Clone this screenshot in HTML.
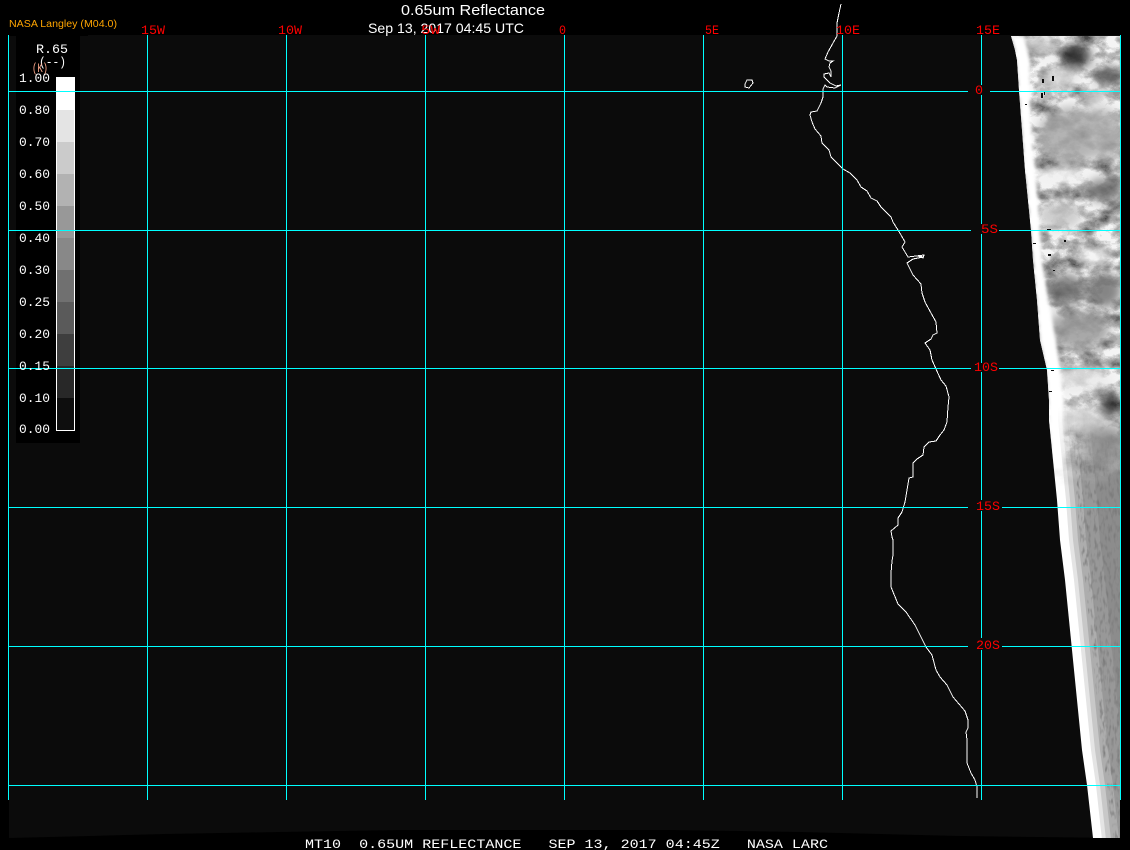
<!DOCTYPE html>
<html><head><meta charset="utf-8"><title>0.65um Reflectance</title>
<style>
html,body{margin:0;padding:0;background:#000;width:1130px;height:850px;overflow:hidden}
svg{display:block}
text{white-space:pre}
.m{font-family:"Liberation Mono","DejaVu Sans Mono",monospace}
.s{font-family:"Liberation Sans",sans-serif}
.r{fill:#ff0000;font-size:13px}
.w{fill:#fff;font-size:13px}
.g rect{fill:#00ffff}
</style></head><body>
<svg width="1130" height="850" viewBox="0 0 1130 850" xmlns="http://www.w3.org/2000/svg">
<defs>
<clipPath id="sat"><polygon points="1011,36 1015,50 1017,60 1019,90 1022,130 1025,170 1028,200 1031,230 1033,260 1037,300 1040,340 1047,370 1049,400 1049,420 1052,450 1057,500 1060,540 1065,580 1071,640 1077,700 1082,750 1087,785 1093,838 1120,838 1120,36"/></clipPath>
<filter id="cl" x="0" y="0" width="100%" height="100%" color-interpolation-filters="sRGB">
<feTurbulence type="fractalNoise" baseFrequency="0.05 0.07" numOctaves="4" seed="7"/>
<feColorMatrix type="matrix" values="1.8 0 0 0 -0.24 1.8 0 0 0 -0.24 1.8 0 0 0 -0.24 0 0 0 0 1"/>
<feComponentTransfer><feFuncR type="discrete" tableValues=".3 .4 .48 .54 .6 .66 .72 .8 .88 .96"/><feFuncG type="discrete" tableValues=".3 .4 .48 .54 .6 .66 .72 .8 .88 .96"/><feFuncB type="discrete" tableValues=".3 .4 .48 .54 .6 .66 .72 .8 .88 .96"/></feComponentTransfer>
</filter>
<filter id="st" x="0" y="0" width="100%" height="100%" color-interpolation-filters="sRGB">
<feTurbulence type="fractalNoise" baseFrequency="0.35 0.12" numOctaves="2" seed="3"/>
<feColorMatrix type="matrix" values="0 0 0 0 .47 0 0 0 0 .47 0 0 0 0 .47 2.4 0 0 0 -1.15"/>
</filter>
<filter id="b5"><feGaussianBlur stdDeviation="5"/></filter>
<filter id="b3"><feGaussianBlur stdDeviation="1.5"/></filter>
<linearGradient id="fade" x1="0" y1="0" x2="0" y2="1"><stop offset="0" stop-color="#fff"/><stop offset=".82" stop-color="#fff"/><stop offset="1" stop-color="#000"/></linearGradient>
<mask id="fm" maskUnits="userSpaceOnUse" x="1000" y="36" width="130" height="450"><rect x="1000" y="36" width="130" height="450" fill="url(#fade)"/></mask>
<polygon id="edge" points="1037,300 1040,340 1047,370 1049,400 1049,420 1052,450 1057,500 1060,540 1065,580 1071,640 1077,700 1082,750 1087,785 1093,840 1130,840 1130,300"/>
<clipPath id="nc"><use href="#edge" x="20"/></clipPath>
</defs>
<rect width="1130" height="850" fill="#000"/>
<polygon fill="#0b0b0b" points="9,36 88,36 88,35 1120,35 1120,838 960,836 800,832 670,830 400,830 280,832 165,834 125,835 90,836 50,837 9,838"/>
<rect x="16" y="36" width="64" height="407" fill="#000"/>

<!-- satellite -->
<g clip-path="url(#sat)">
<rect x="1000" y="36" width="130" height="810" fill="#fff"/>
<use href="#edge" x="9" fill="#e4e4e4"/>
<use href="#edge" x="13" fill="#c8c8c8"/>
<use href="#edge" x="18" fill="#adadad"/>
<use href="#edge" x="26" fill="#989898"/>
<use href="#edge" x="40" fill="#8c8c8c"/>
<g clip-path="url(#nc)"><rect x="1066" y="380" width="56" height="460" filter="url(#st)"/></g>

<g mask="url(#fm)">
<rect x="1000" y="36" width="130" height="450" filter="url(#cl)"/>
<g filter="url(#b5)" opacity=".8">
<ellipse cx="1076" cy="56" rx="15" ry="13" fill="#1c1c1c"/>
<ellipse cx="1108" cy="75" rx="14" ry="9" fill="#555"/>
<ellipse cx="1040" cy="45" rx="18" ry="9" fill="#ccc"/>
<ellipse cx="1060" cy="78" rx="20" ry="10" fill="#e0e0e0"/>
<ellipse cx="1095" cy="100" rx="10" ry="14" fill="#ddd"/>
<ellipse cx="1072" cy="135" rx="34" ry="28" fill="#a4a4a4"/>
<ellipse cx="1105" cy="135" rx="18" ry="26" fill="#aaa"/>
<ellipse cx="1060" cy="175" rx="28" ry="9" fill="#f0f0f0"/>
<ellipse cx="1105" cy="190" rx="20" ry="12" fill="#777"/>
<ellipse cx="1060" cy="215" rx="22" ry="14" fill="#c4c4c4"/>
<ellipse cx="1095" cy="255" rx="16" ry="8" fill="#f4f4f4"/>
<ellipse cx="1065" cy="290" rx="20" ry="16" fill="#666"/>
<ellipse cx="1105" cy="290" rx="16" ry="18" fill="#6a6a6a"/>
<ellipse cx="1078" cy="330" rx="32" ry="20" fill="#969696"/>
<ellipse cx="1080" cy="380" rx="30" ry="12" fill="#e8e8e8"/>
<ellipse cx="1110" cy="405" rx="9" ry="14" fill="#2a2a2a"/>
<ellipse cx="1080" cy="420" rx="24" ry="14" fill="#ececec"/>
<ellipse cx="1105" cy="445" rx="20" ry="18" fill="#8a8a8a"/>
</g>
<g filter="url(#b3)">
<polygon fill="#fff" points="1011,36 1015,50 1019,90 1022,130 1025,170 1028,200 1033,260 1037,300 1040,340 1047,370 1049,420 1052,470 1064,470 1064,400 1056,340 1048,300 1042,260 1038,200 1033,150 1030,110 1030,60 1024,36"/>
</g>
</g>
</g>
<!-- speckles -->
<g fill="#0b0b0b" shape-rendering="crispEdges">
<rect x="1042" y="79" width="2" height="4"/><rect x="1052" y="76" width="2" height="5"/><rect x="1041" y="93" width="2" height="5"/><rect x="1044" y="92" width="1" height="3"/><rect x="1025" y="104" width="2" height="1"/><rect x="1047" y="229" width="4" height="1"/><rect x="1033" y="243" width="3" height="1"/><rect x="1048" y="254" width="3" height="2"/><rect x="1064" y="240" width="2" height="2"/><rect x="1053" y="270" width="2" height="1"/><rect x="1051" y="370" width="3" height="1"/><rect x="1049" y="391" width="3" height="1"/>
</g>

<!-- coastline -->
<g fill="none" stroke="#fff" stroke-width="1" shape-rendering="crispEdges">
<polyline points="841,4 839,13 837,23 837,36 833,43 828,52 825,59 829,61 833,61 830,63 829,67 831,71 831,77 829,73 824,74 824,77 827,80 830,83 836,86 841,85 835,88 827,87 825,85 823,89 823,97 821,103 817,111 811,112 810,115 812,122 815,129 821,136 822,143 829,150 831,157 837,163 843,169 850,173 857,180 861,187 867,191 871,198 877,201 881,207 891,217 893,222 898,230 901,235 905,242 902,247 908,257 924,255 923,258 918,256 923,257 913,259 907,263 913,275 921,284 922,293 925,302 931,313 936,322 937,333 933,335 931,339 925,343 930,350 932,360 936,369 941,380 946,386 949,397 948,407 947,422 944,430 940,435 936,441 929,442 924,447 923,455 917,459 913,463 913,477 909,478 907,490 905,502 902,512 898,518 898,525 891,531 892,537 893,540 893,555 892,561 891,573 891,587 898,604 906,612 915,625 926,647 932,655 936,670 940,677 947,685 953,697 965,711 968,720 968,728 966,732 967,740 967,753 967,763 971,773 975,780 977,787 977,798"/>
<polygon points="745,84 747,80 752,80 753,83 749,88 745,87"/>
</g>

<!-- colour bar -->
<g shape-rendering="crispEdges">
<rect x="57" y="77" width="17" height="33" fill="#fff"/>
<rect x="57" y="110" width="17" height="32" fill="#e4e4e4"/>
<rect x="57" y="142" width="17" height="32" fill="#cbcbcb"/>
<rect x="57" y="174" width="17" height="32" fill="#b2b2b2"/>
<rect x="57" y="206" width="17" height="32" fill="#989898"/>
<rect x="57" y="238" width="17" height="32" fill="#888"/>
<rect x="57" y="270" width="17" height="32" fill="#707070"/>
<rect x="57" y="302" width="17" height="32" fill="#5a5a5a"/>
<rect x="57" y="334" width="17" height="32" fill="#3e3e3e"/>
<rect x="57" y="366" width="17" height="32" fill="#282828"/>
<rect x="57" y="398" width="17" height="32" fill="#0e0e0e"/>
<rect x="56" y="77" width="1" height="354" fill="#fff"/>
<rect x="74" y="77" width="1" height="354" fill="#fff"/>
<rect x="56" y="430" width="19" height="1" fill="#fff"/>
<rect x="56" y="77" width="19" height="1" fill="#fff"/>
</g>

<!-- grid -->
<g class="g" shape-rendering="crispEdges">
<rect x="8" y="35" width="1" height="765"/>
<rect x="147" y="35" width="1" height="765"/>
<rect x="286" y="35" width="1" height="765"/>
<rect x="425" y="35" width="1" height="765"/>
<rect x="564" y="35" width="1" height="765"/>
<rect x="703" y="35" width="1" height="765"/>
<rect x="842" y="35" width="1" height="765"/>
<rect x="981" y="35" width="1" height="50"/>
<rect x="981" y="95" width="1" height="129"/>
<rect x="981" y="234" width="1" height="129"/>
<rect x="981" y="372" width="1" height="128"/>
<rect x="981" y="511" width="1" height="127"/>
<rect x="981" y="650" width="1" height="150"/>
<rect x="1120" y="35" width="1" height="765"/>
<rect x="9" y="91" width="959" height="1"/><rect x="990" y="91" width="131" height="1"/>
<rect x="9" y="230" width="962" height="1"/><rect x="999" y="230" width="122" height="1"/>
<rect x="9" y="368" width="962" height="1"/><rect x="999" y="368" width="122" height="1"/>
<rect x="9" y="507" width="959" height="1"/><rect x="1002" y="507" width="119" height="1"/>
<rect x="9" y="646" width="959" height="1"/><rect x="1002" y="646" width="119" height="1"/>
<rect x="9" y="785" width="1112" height="1"/>
</g>

<!-- legend text -->
<g class="m w">
<text x="36" y="53" textLength="32" lengthAdjust="spacingAndGlyphs">R.65</text>
<text x="39" y="66" textLength="27" lengthAdjust="spacingAndGlyphs">(--)</text>
<text x="32" y="72" textLength="16" lengthAdjust="spacingAndGlyphs" style="fill:#ffa98c">(K)</text>
<text x="19" y="82" textLength="31" lengthAdjust="spacingAndGlyphs">1.00</text>
<text x="19" y="114" textLength="31" lengthAdjust="spacingAndGlyphs">0.80</text>
<text x="19" y="146" textLength="31" lengthAdjust="spacingAndGlyphs">0.70</text>
<text x="19" y="178" textLength="31" lengthAdjust="spacingAndGlyphs">0.60</text>
<text x="19" y="210" textLength="31" lengthAdjust="spacingAndGlyphs">0.50</text>
<text x="19" y="242" textLength="31" lengthAdjust="spacingAndGlyphs">0.40</text>
<text x="19" y="274" textLength="31" lengthAdjust="spacingAndGlyphs">0.30</text>
<text x="19" y="306" textLength="31" lengthAdjust="spacingAndGlyphs">0.25</text>
<text x="19" y="338" textLength="31" lengthAdjust="spacingAndGlyphs">0.20</text>
<text x="19" y="370" textLength="31" lengthAdjust="spacingAndGlyphs">0.15</text>
<text x="19" y="402" textLength="31" lengthAdjust="spacingAndGlyphs">0.10</text>
<text x="19" y="433" textLength="31" lengthAdjust="spacingAndGlyphs">0.00</text>
</g>

<!-- headers -->
<text class="s" x="9" y="27" font-size="10" fill="#ffa500" textLength="108" lengthAdjust="spacingAndGlyphs">NASA Langley (M04.0)</text>
<text class="s" x="401" y="15" font-size="14.5" fill="#fff" textLength="144" lengthAdjust="spacingAndGlyphs">0.65um Reflectance</text>
<text class="s" x="368" y="33" font-size="14" fill="#fff" textLength="156" lengthAdjust="spacingAndGlyphs">Sep 13, 2017 04:45 UTC</text>

<!-- map labels -->
<g class="m r">
<text x="141" y="34" textLength="24" lengthAdjust="spacingAndGlyphs">15W</text>
<text x="278" y="34" textLength="24" lengthAdjust="spacingAndGlyphs">10W</text>
<text x="421" y="34" textLength="19" lengthAdjust="spacingAndGlyphs">5W</text>
<text x="559" y="34" textLength="7" lengthAdjust="spacingAndGlyphs">0</text>
<text x="705" y="34" textLength="14" lengthAdjust="spacingAndGlyphs">5E</text>
<text x="836" y="34" textLength="24" lengthAdjust="spacingAndGlyphs">10E</text>
<text x="976" y="34" textLength="24" lengthAdjust="spacingAndGlyphs">15E</text>
<text x="975" y="94" textLength="8" lengthAdjust="spacingAndGlyphs">0</text>
<text x="981" y="233" textLength="17" lengthAdjust="spacingAndGlyphs">5S</text>
<text x="974" y="371" textLength="24" lengthAdjust="spacingAndGlyphs">10S</text>
<text x="976" y="510" textLength="24" lengthAdjust="spacingAndGlyphs">15S</text>
<text x="976" y="649" textLength="24" lengthAdjust="spacingAndGlyphs">20S</text>
</g>

<text class="m" x="305" y="848" font-size="13" fill="#fff" textLength="523" lengthAdjust="spacingAndGlyphs">MT10  0.65UM REFLECTANCE   SEP 13, 2017 04:45Z   NASA LARC</text>
</svg>
</body></html>
